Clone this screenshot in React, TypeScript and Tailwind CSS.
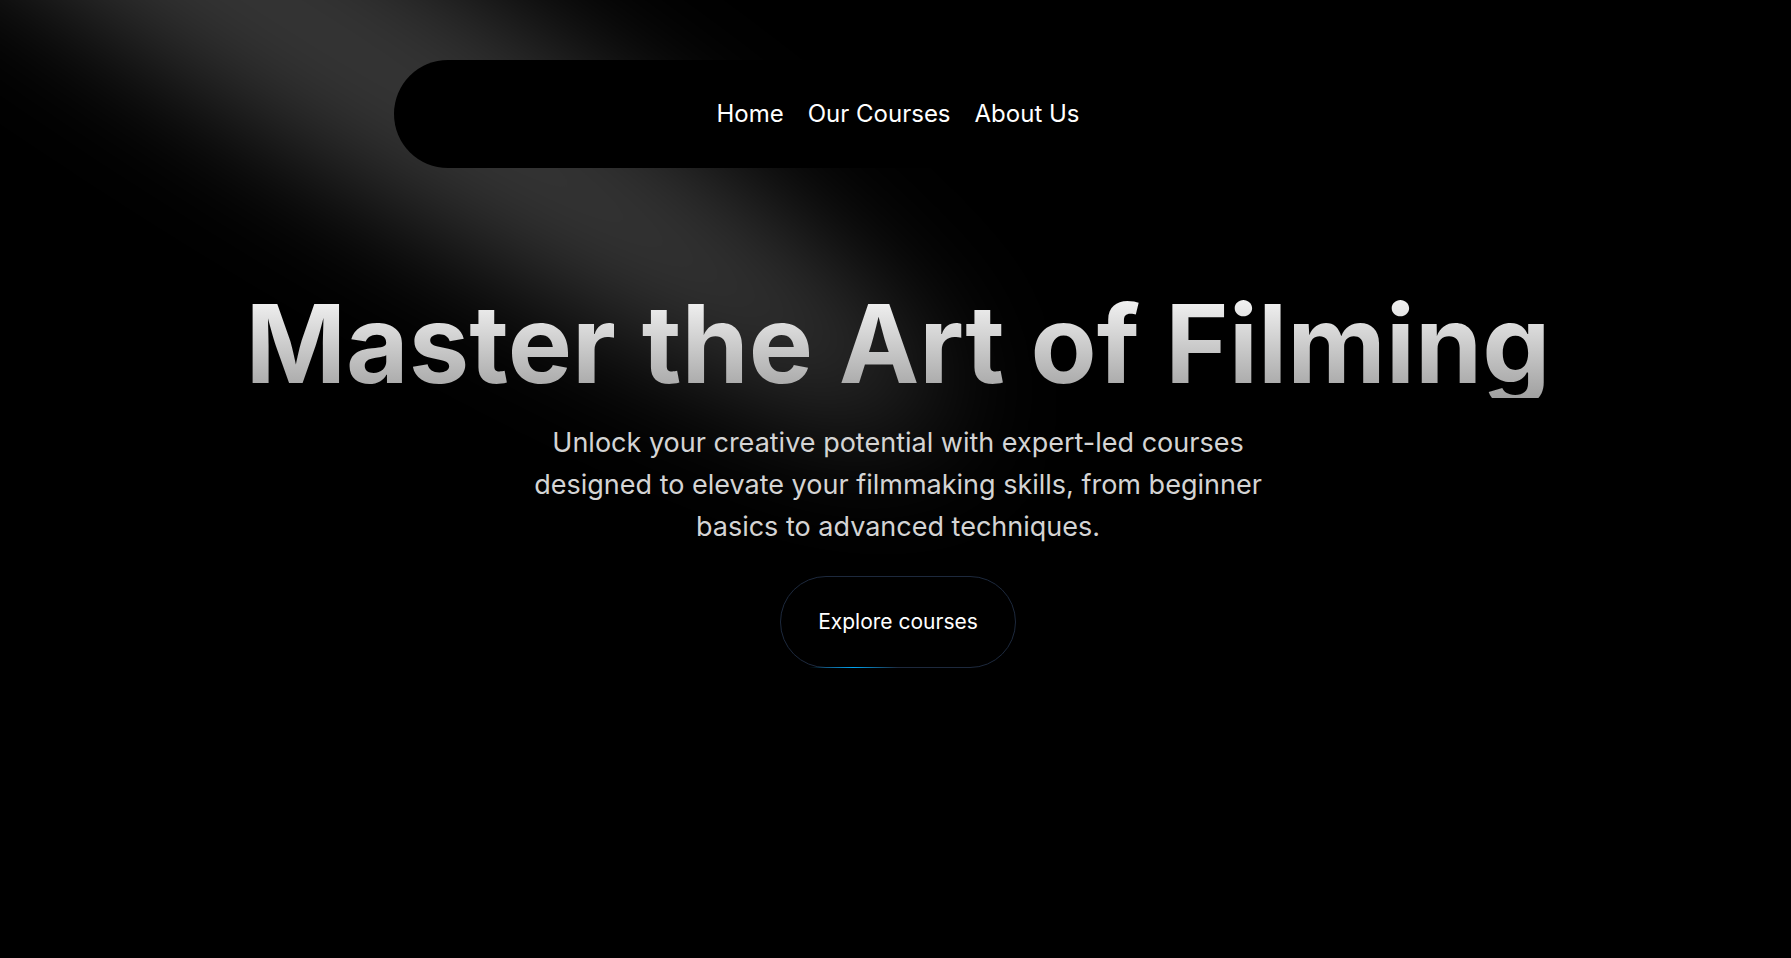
import React from "react"

function Spotlight() {
  return (
    <svg
      className="pointer-events-none absolute inset-0 z-0 h-full w-full"
      viewBox="0 0 1791 958"
      preserveAspectRatio="none"
      fill="none"
    >
      <defs>
        <filter id="beamBlur" x="-50%" y="-50%" width="200%" height="200%" colorInterpolationFilters="sRGB">
          <feGaussianBlur stdDeviation="64" />
        </filter>
      </defs>
      <g filter="url(#beamBlur)">
        <ellipse
          cx="304"
          cy="21"
          rx="750"
          ry="115"
          transform="rotate(32 304 21)"
          fill="white"
          fillOpacity="0.21"
        />
      </g>
    </svg>
  )
}

export default function App() {
  const links = ["Home", "Our Courses", "About Us"]

  return (
    <div className="relative min-h-screen w-full overflow-hidden bg-black font-['Inter',sans-serif] antialiased">
      <Spotlight />

      <div className="relative z-10 flex flex-col items-center pl-[5px]">
        <nav className="mt-[60px] flex h-[108px] w-[1008px] items-center justify-center gap-6 rounded-full bg-black">
          {links.map((l) => (
            <a key={l} href="#" className="text-2xl text-white">
              {l}
            </a>
          ))}
        </nav>

        <h1 className="mt-[122px] bg-gradient-to-b from-neutral-50 to-neutral-400 bg-clip-text text-[108px] font-bold leading-none text-transparent">
          Master the Art of Filming
        </h1>

        <p className="mt-6 max-w-3xl text-center text-[27px] leading-[42px] text-neutral-300">
          Unlock your creative potential with expert-led courses designed to elevate your filmmaking skills, from beginner basics to advanced techniques.
        </p>

        <button className="relative mt-7 rounded-full border border-slate-800 bg-black px-[37px] py-[31px] text-[21px] leading-7 text-white">
          Explore courses
          <span className="absolute -bottom-px left-[12%] h-px w-[38%] bg-gradient-to-r from-transparent via-sky-500 to-transparent" />
        </button>
      </div>
    </div>
  )
}
